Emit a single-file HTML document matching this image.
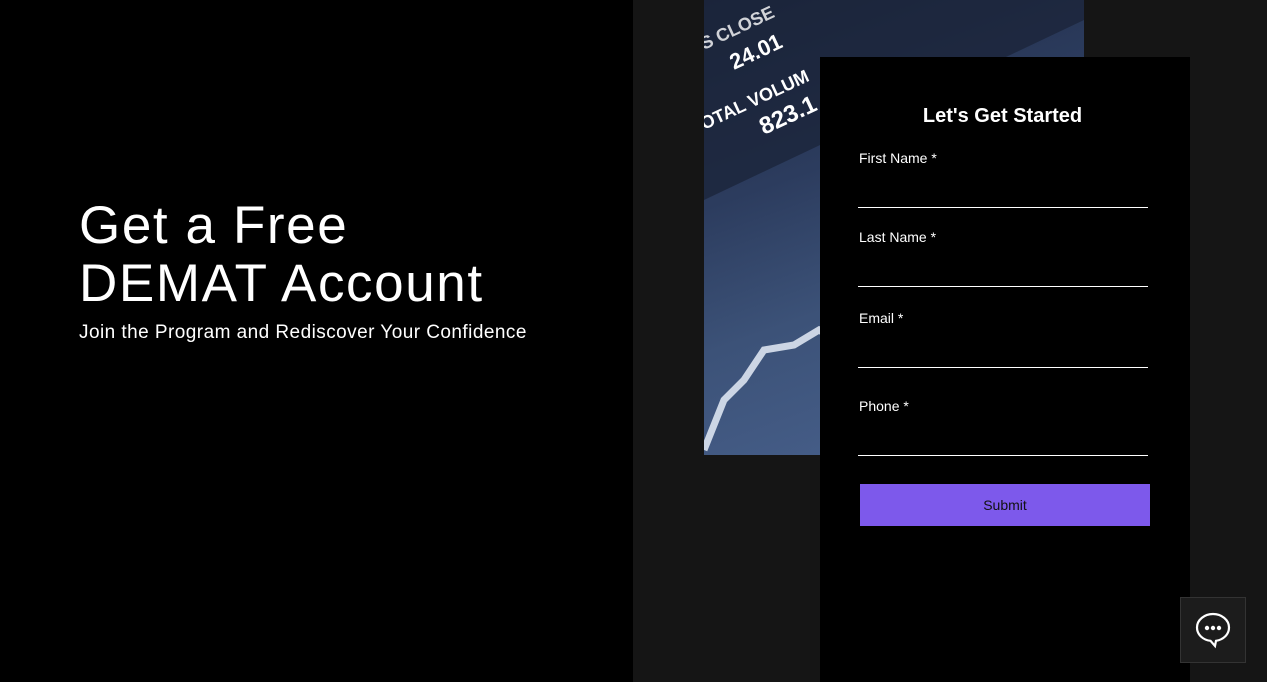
<!DOCTYPE html>
<html><head><style>
body{margin:0;width:1267px;height:682px;overflow:hidden;background:#000;font-family:"Liberation Sans",sans-serif;position:relative}
.right{position:absolute;left:633px;top:0;width:634px;height:682px;background:#151515}
.img{position:absolute;left:704px;top:0;width:380px;height:455px;background:linear-gradient(160deg,#1f2b45 0%,#2c3c5e 35%,#3c5278 60%,#4a6390 100%);overflow:hidden}
.form{position:absolute;left:820px;top:57px;width:370px;height:625px;background:#000}
h1{position:absolute;left:79px;top:197px;margin:0;color:#fff;font-weight:400;font-size:53px;line-height:58px;letter-spacing:1.6px}
.sub{position:absolute;left:79px;top:322px;color:#fff;font-size:19px;letter-spacing:0.45px}
.title{position:absolute;left:0;width:365px;text-align:center;top:48px;color:#fff;font-weight:bold;font-size:20px}
.lab{position:absolute;left:39px;color:#fff;font-size:14px}
.line{position:absolute;left:38px;width:290px;height:1px;background:#fff}
.btn{position:absolute;left:40px;top:427px;width:290px;height:42px;background:#7d59eb;color:#111;font-size:14px;text-align:center;line-height:42px}
.chat{position:absolute;left:1180px;top:597px;width:66px;height:66px;background:#1c1c1c;border:1px solid #333;box-sizing:border-box}
</style></head><body>
<div class="right"></div>
<div class="img">
<svg width="380" height="455" style="position:absolute;left:0;top:0">
<polygon points="0,200 380,20 380,0 0,0" fill="#1a2236" opacity=".7"/>
<g fill="#fff" font-family="Liberation Sans" font-weight="bold">
<text x="0" y="50" font-size="18" transform="rotate(-25 0 50)" opacity=".8">S CLOSE</text>
<text x="30" y="70" font-size="22" transform="rotate(-25 30 70)">24.01</text>
<text x="0" y="130" font-size="18" transform="rotate(-25 0 130)">OTAL VOLUM</text>
<text x="60" y="135" font-size="24" transform="rotate(-25 60 135)">823.1</text>
</g>
<polyline points="0,450 20,400 40,380 60,350 90,345 115,330 140,345 180,320" stroke="#e5ecf7" stroke-width="7" fill="none" opacity=".85"/>
</svg></div>
<h1>Get a Free<br>DEMAT Account</h1>
<div class="sub">Join the Program and Rediscover Your Confidence</div>
<div class="form">
<div class="title">Let's Get Started</div>
<div class="lab" style="top:93px">First Name *</div><div class="line" style="top:150px"></div>
<div class="lab" style="top:172px">Last Name *</div><div class="line" style="top:229px"></div>
<div class="lab" style="top:253px">Email *</div><div class="line" style="top:310px"></div>
<div class="lab" style="top:341px">Phone *</div><div class="line" style="top:398px"></div>
<div class="btn">Submit</div>
</div>
<div class="chat"><svg width="65" height="65" viewBox="0 0 65 65"><path d="M32 16c-8.5 0-16 5.8-16 13.5 0 7.3 6.3 12.6 13.5 13.3l4.5 5.2 1-5.2c7.3-1 13-6.3 13-13.3 0-7.7-7.5-13.5-16-13.5z" fill="none" stroke="#fff" stroke-width="2.2"/><circle cx="26" cy="30" r="2.2" fill="#fff"/><circle cx="32" cy="30" r="2.2" fill="#fff"/><circle cx="38" cy="30" r="2.2" fill="#fff"/></svg></div>
</body></html>
